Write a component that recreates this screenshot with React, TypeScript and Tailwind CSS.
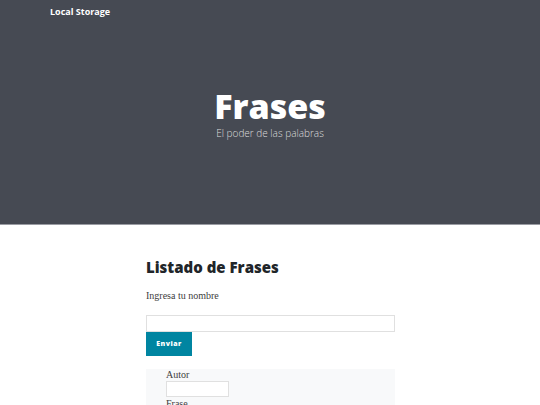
export default function App() {
  const os = { fontFamily: '"Open Sans", sans-serif' };
  const serif = { fontFamily: '"Liberation Serif", serif' };
  return (
    <div className="w-[540px] h-[405px] overflow-hidden bg-white" style={os}>
      <header className="h-[225px] bg-[#464a53] border-b border-[#9a9ca3] flex flex-col">
        <div className="pl-[50px] pt-[5px] text-white text-[9px] font-bold leading-[14px]">Local Storage</div>
        <div className="flex flex-col items-center mt-[68px]">
          <h1 className="text-white text-[34px] font-extrabold leading-[38px]">Frases</h1>
          <p className="text-[#dcdcdc] text-[10px] font-light leading-[14px] mt-[1px]">El poder de las palabras</p>
        </div>
      </header>
      <main className="w-[249px] ml-[146px] pt-[31px]">
        <h2 className="text-[15px] font-extrabold text-[#212529] leading-[22px]">Listado de Frases</h2>
        <p className="text-[10px] text-[#404040] mt-[11px] leading-[14px]" style={serif}>Ingresa tu nombre</p>
        <input className="block w-full h-[17px] mt-[12px] border border-[#e0e0e0] bg-white" />
        <button className="block w-[46px] h-[24px] bg-[#0085a1] text-white text-[7px] font-extrabold tracking-[0.5px]">Enviar</button>
        <div className="mt-[13px] bg-[#f8f9fa] pl-[20px] pt-0 h-[60px]">
          <div className="text-[10px] text-[#404040] leading-[12px]" style={serif}>Autor</div>
          <input className="block w-[63px] h-[16px] border border-[#e0e0e0] bg-white" />
          <div className="text-[10px] text-[#404040] leading-[12px] mt-[1px]" style={serif}>Frase</div>
        </div>
      </main>
    </div>
  );
}
